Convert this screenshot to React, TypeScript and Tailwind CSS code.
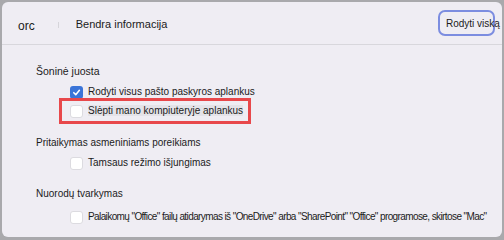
import React from "react";

function Check({ checked }: { checked?: boolean }) {
  return checked ? (
    <span className="flex h-[13px] w-[13px] shrink-0 items-center justify-center rounded-[3px] bg-[#3a74d8]">
      <svg width="9" height="9" viewBox="0 0 10 10">
        <path d="M2 5.2 L4.2 7.5 L8.2 2.5" fill="none" stroke="white" strokeWidth="1.7" strokeLinecap="round" strokeLinejoin="round" />
      </svg>
    </span>
  ) : (
    <span className="h-[13px] w-[13px] shrink-0 rounded-[3px] border border-[#dcdbe0] bg-white" />
  );
}

function Row({ checked, children, textClass = "" }: { checked?: boolean; children: React.ReactNode; textClass?: string }) {
  return (
    <div className="flex h-[14px] items-center gap-[5px] pl-[68px]">
      <Check checked={checked} />
      <span className={"whitespace-nowrap text-[10px] leading-[14px] text-[#1b1b1b] " + textClass}>{children}</span>
    </div>
  );
}

export default function App() {
  return (
    <div className="h-[240px] w-[504px] bg-[#a9a9ac] p-[2px] pb-[3px]" style={{ fontFamily: '"Liberation Sans", Arial, sans-serif' }}>
      <div className="flex h-full w-full flex-col overflow-hidden rounded-[6px] bg-[#efedf3]">
        <div className="flex h-[43px] shrink-0 items-center border-b border-[#d8d7dc]">
          <span className="ml-[16px] mt-[5px] text-[12px] text-[#1b1b1b]">orc</span>
          <span className="ml-[23px] mt-[3px] h-[6px] w-px bg-[#d6d5da]" />
          <span className="ml-[17px] mt-[2px] text-[11px] text-[#1b1b1b]">Bendra informacija</span>
          <div className="ml-auto mr-[7px] flex h-[26px] w-[57px] items-center rounded-[7px] border-[2px] border-[#7c8de0] pl-[6px]">
            <span className="whitespace-nowrap text-[10px] text-[#1b1b1b]">Rodyti viską</span>
          </div>
        </div>
        <div className="flex flex-col pt-[19px]">
          <div className="pl-[34px] text-[10.5px] leading-[14px] text-[#1b1b1b]">Šoninė juosta</div>
          <div className="mt-[7px]">
            <Row checked>Rodyti visus pašto paskyros aplankus</Row>
          </div>
          <div className="-mt-[1px] ml-[57px] flex h-[26px] w-[192px] items-center border-[3px] border-[#e8484b]">
            <div className="-ml-[60px]">
              <Row>
                <span className="bg-[#e4e3e8]">Slėpti mano kompiuteryje aplankus</span>
              </Row>
            </div>
          </div>
          <div className="mt-[12px] pl-[34px] text-[10px] leading-[14px] text-[#1b1b1b]">Pritaikymas asmeniniams poreikiams</div>
          <div className="mt-[6px]">
            <Row>Tamsaus režimo išjungimas</Row>
          </div>
          <div className="mt-[17px] pl-[34px] text-[10px] leading-[14px] text-[#1b1b1b]">Nuorodų tvarkymas</div>
          <div className="mt-[9px]">
            <Row textClass="tracking-[-0.6px]">Palaikomų "Office" failų atidarymas iš "OneDrive" arba "SharePoint" "Office" programose, skirtose "Mac"</Row>
          </div>
        </div>
      </div>
    </div>
  );
}
